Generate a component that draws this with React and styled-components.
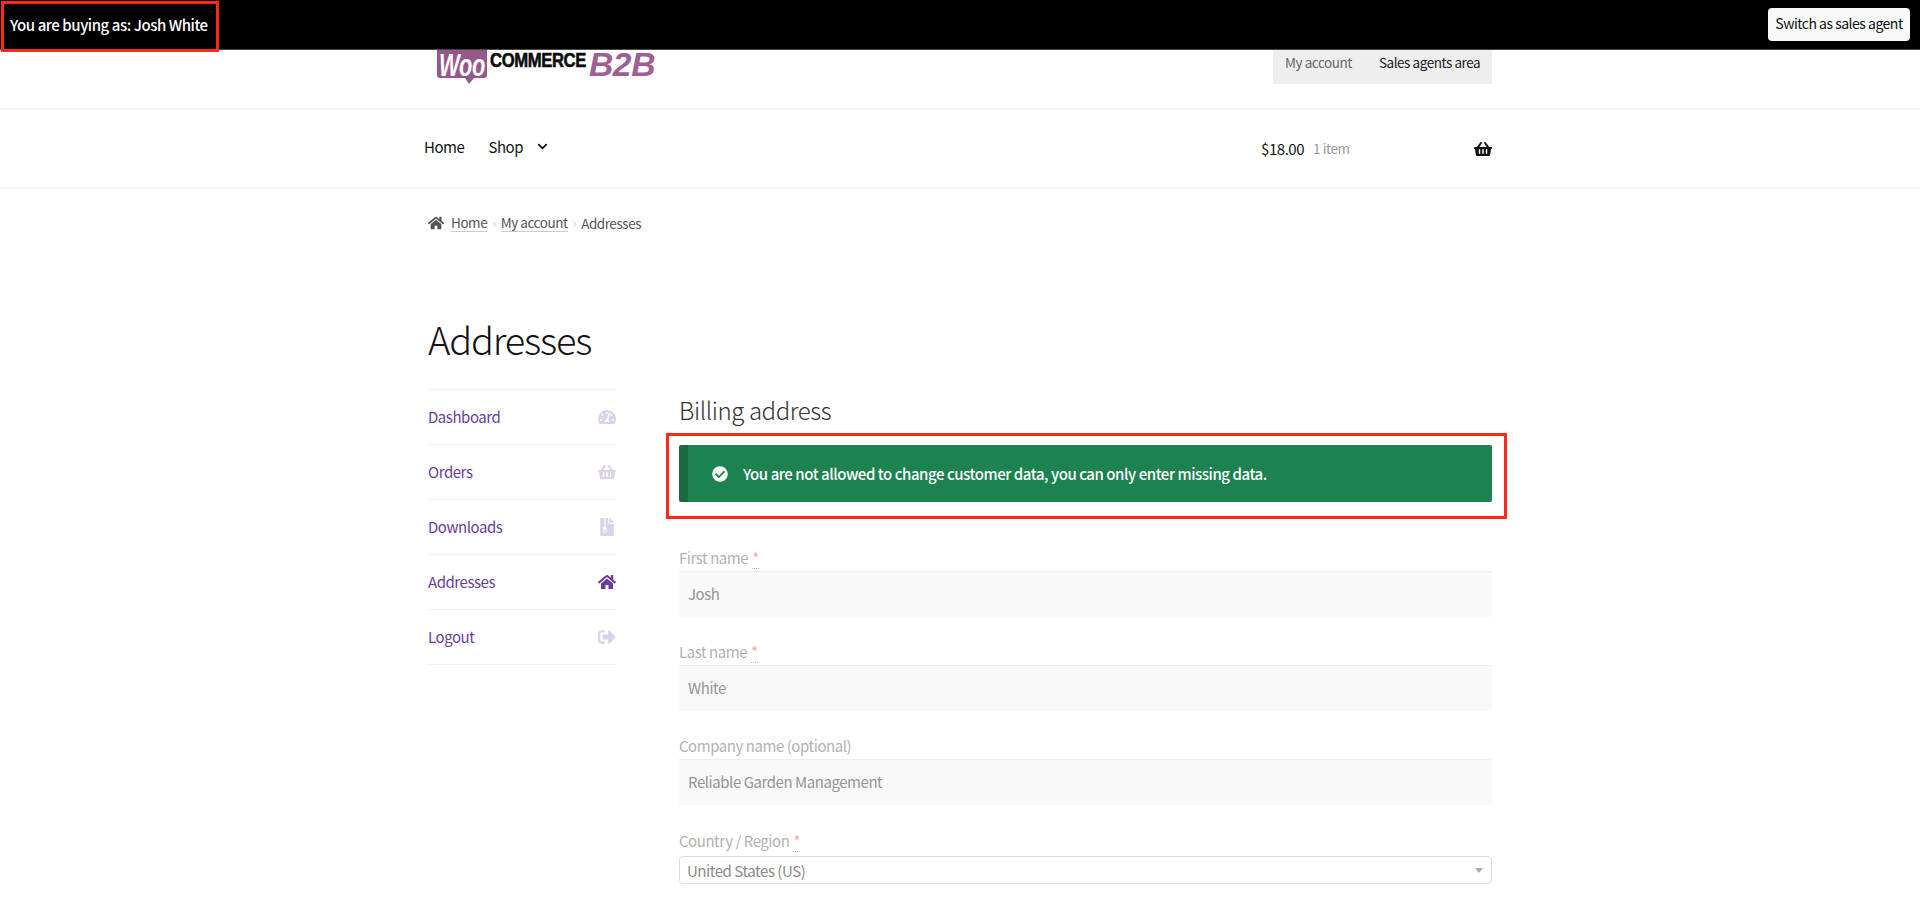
import React from 'react';
import styled, { createGlobalStyle } from 'styled-components';
import {
  FaCheckCircle,
  FaChevronDown,
  FaFileArchive,
  FaHome,
  FaShoppingBasket,
  FaSignOutAlt,
  FaTachometerAlt,
} from 'react-icons/fa';

const GlobalStyle = createGlobalStyle`
  html, body { margin: 0; padding: 0; background: #fff; }
  body {
    font-family: "Noto Sans CJK JP", "Open Sans", sans-serif;
    font-size: 15px;
    letter-spacing: -0.45px;
    line-height: 1.4;
    color: #43454b;
    overflow: hidden;
    height: 900px;
  }
  * { box-sizing: border-box; }
`;

const TopBar = styled.div`
  height: 50px;
  background: #000;
  border-bottom: 1px solid #444;
  display: flex;
  align-items: center;
  justify-content: space-between;
  padding: 0 10px 1px 10px;
  position: relative;
  z-index: 2;
`;

const Highlight = styled.div`
  position: absolute;
  border: 3px solid #fb2a1c;
  pointer-events: none;
  ${(p) => p.$css}
`;

const BuyingAs = styled.span`
  color: #fff;
  font-size: 15px;
  font-weight: 500;
`;

const SwitchButton = styled.button`
  width: 142px;
  height: 33px;
  padding: 0;
  border: 0;
  border-radius: 4px;
  background: #f8f9fb;
  color: #111;
  font: inherit;
  font-size: 14px;
  letter-spacing: -0.5px;
  white-space: nowrap;
`;

const Container = styled.div`
  width: 1064px;
  margin: 0 auto;
`;

const Masthead = styled.header`
  height: 60px;
  border-bottom: 2px solid #f1f1f1;
`;

const MastheadInner = styled(Container)`
  display: flex;
  justify-content: space-between;
  align-items: flex-start;
  height: 100%;
`;

const LogoMark = styled.svg`
  display: block;
  margin-left: 8px;
`;

const AccountTabs = styled.nav`
  width: 219px;
  height: 34px;
  background: #eeeeee;
  display: flex;
  align-items: center;
  gap: 27px;
  padding: 0 12px 9px;
  font-size: 13.5px;
  white-space: nowrap;
`;

const AccountTab = styled.span`
  color: ${(p) => (p.$strong ? '#1a1a1a' : '#666')};
`;

const NavBar = styled.div`
  height: 79px;
  border-bottom: 2px solid #f5f5f5;
`;

const NavInner = styled(Container)`
  display: flex;
  justify-content: space-between;
  align-items: center;
  height: 100%;
`;

const MainNav = styled.nav`
  display: flex;
  align-items: center;
  margin-left: -4px;
  margin-top: -4px;
  color: #111;
`;

const NavLink = styled.span`
  margin-right: ${(p) => p.$gap}px;
`;

const CartBox = styled.div`
  width: 231px;
  display: flex;
  align-items: center;
  color: #111;
`;

const CartCount = styled.span`
  margin-left: 9px;
  flex: 1;
  font-size: 13.5px;
  color: #999;
`;

const Breadcrumb = styled(Container)`
  display: flex;
  align-items: center;
  height: 20px;
  margin-top: 24px;
  font-size: 13.5px;
  color: #555;
  svg { color: #555; margin-right: 7px; }
`;

const CrumbLink = styled.span`
  border-bottom: 1px solid #ccc;
  line-height: 17px;
`;

const CrumbSep = styled.span`
  color: #ccc;
  margin: 0 5px;
  font-size: 13px;
`;

const PageTitle = styled.h1`
  margin: 78px 0 0;
  height: 82px;
  font-size: 38px;
  font-weight: 200;
  letter-spacing: -1.2px;
  line-height: 56px;
  color: #131315;
`;

const Columns = styled.div`
  display: flex;
  gap: 63px;
  margin-top: -4px;
`;

const SideMenu = styled.ul`
  list-style: none;
  width: 188px;
  margin: 0;
  padding: 0;
  border-top: 1px solid #f0f0f0;
  flex: none;
`;

const SideItem = styled.li`
  height: 55px;
  border-bottom: 1px solid #f0f0f0;
  display: flex;
  align-items: center;
  justify-content: space-between;
  color: #693d9b;
  padding-bottom: 1px;
  svg { color: ${(p) => (p.$active ? '#693d9b' : '#ddd2ec')}; }
`;

const Content = styled.section`
  flex: 1;
  min-width: 0;
  position: relative;
`;

const SectionTitle = styled.h3`
  margin: 0;
  height: 56px;
  font-size: 24px;
  font-weight: 300;
  letter-spacing: -0.4px;
  line-height: 42px;
  color: #333;
`;

const Notice = styled.div`
  height: 57px;
  background: #1c8250;
  border-left: 9px solid #1a6b41;
  border-radius: 2px;
  color: #fff;
  display: flex;
  align-items: center;
  gap: 15px;
  padding-left: 24px;
  font-weight: 500;
`;

const Field = styled.div`
  margin-top: ${(p) => p.$top}px;
`;

const FieldLabel = styled.label`
  display: block;
  height: ${(p) => p.$height || 24}px;
  line-height: 22px;
  color: #b2b2b2;
`;

const Required = styled.abbr`
  color: #f5a9a0;
  border-bottom: 1px dotted #f5a9a0;
  margin-left: 4px;
`;

const TextInput = styled.div`
  height: 46px;
  background: #f9f9f9;
  border-top: 1px solid #eeeeee;
  padding-left: 9px;
  display: flex;
  align-items: center;
  padding-bottom: 2px;
  color: #959595;
`;

const SelectBox = styled.div`
  height: 28px;
  border: 1px solid #dcdcdc;
  border-radius: 4px;
  padding: 0 8px 0 7px;
  display: flex;
  align-items: center;
  justify-content: space-between;
  color: #8b8b8b;
`;

const SelectArrow = styled.span`
  width: 0;
  height: 0;
  border-left: 4px solid transparent;
  border-right: 4px solid transparent;
  border-top: 5px solid #aaa;
`;

const menuItems = [
  { label: 'Dashboard', icon: FaTachometerAlt },
  { label: 'Orders', icon: FaShoppingBasket },
  { label: 'Downloads', icon: FaFileArchive },
  { label: 'Addresses', icon: FaHome, active: true },
  { label: 'Logout', icon: FaSignOutAlt },
];

const Logo = () => (
  <LogoMark width="222" height="40" viewBox="0 0 222 40">
    <path
      d="M3 -6 H48 Q51 -6 51 -3 V25 Q51 28 48 28 H38 L33 34 L29 28 H4 Q1 28 1 25 V-3 Q1 -6 3 -6 Z"
      fill="#96588a"
    />
    <text x="3" y="26" fontFamily="Liberation Sans" fontSize="32" fontWeight="700" fontStyle="italic" fill="#fff" textLength="46" lengthAdjust="spacingAndGlyphs">
      Woo
    </text>
    <text x="54" y="17" fontFamily="Liberation Sans" fontSize="20" fontWeight="700" fill="#0c0c0c" stroke="#0c0c0c" strokeWidth="0.6" textLength="96" lengthAdjust="spacingAndGlyphs">
      COMMERCE
    </text>
    <text x="153" y="26" fontFamily="Liberation Sans" fontSize="33" fontWeight="700" fontStyle="italic" fill="#9f5f95" textLength="66" lengthAdjust="spacingAndGlyphs">
      B2B
    </text>
  </LogoMark>
);

const App = () => (
  <>
    <GlobalStyle />
    <TopBar>
      <BuyingAs>You are buying as: Josh White</BuyingAs>
      <SwitchButton>Switch as sales agent</SwitchButton>
      <Highlight $css="left: 1px; top: 1px; width: 218px; height: 51px;" />
    </TopBar>

    <Masthead>
      <MastheadInner>
        <Logo />
        <AccountTabs>
          <AccountTab>My account</AccountTab>
          <AccountTab $strong>Sales agents area</AccountTab>
        </AccountTabs>
      </MastheadInner>
    </Masthead>

    <NavBar>
      <NavInner>
        <MainNav>
          <NavLink $gap={24}>Home</NavLink>
          <NavLink $gap={14}>Shop</NavLink>
          <FaChevronDown size={11} />
        </MainNav>
        <CartBox>
          <span>$18.00</span>
          <CartCount>1 item</CartCount>
          <FaShoppingBasket size={18} />
        </CartBox>
      </NavInner>
    </NavBar>

    <Breadcrumb>
      <FaHome size={16} />
      <CrumbLink>Home</CrumbLink>
      <CrumbSep>›</CrumbSep>
      <CrumbLink>My account</CrumbLink>
      <CrumbSep>›</CrumbSep>
      <span>Addresses</span>
    </Breadcrumb>

    <Container>
      <PageTitle>Addresses</PageTitle>
      <Columns>
        <SideMenu>
          {menuItems.map(({ label, icon: Icon, active }) => (
            <SideItem key={label} $active={active}>
              {label}
              <Icon size={18} />
            </SideItem>
          ))}
        </SideMenu>
        <Content>
          <SectionTitle>Billing address</SectionTitle>
          <Notice>
            <FaCheckCircle size={16} />
            You are not allowed to change customer data, you can only enter missing data.
          </Notice>
          <Highlight $css="left: -13px; right: -15px; top: 44px; height: 86px;" />
          <Field $top={45}>
            <FieldLabel>First name<Required>*</Required></FieldLabel>
            <TextInput>Josh</TextInput>
          </Field>
          <Field $top={24}>
            <FieldLabel>Last name<Required>*</Required></FieldLabel>
            <TextInput>White</TextInput>
          </Field>
          <Field $top={24}>
            <FieldLabel>Company name (optional)</FieldLabel>
            <TextInput>Reliable Garden Management</TextInput>
          </Field>
          <Field $top={25}>
            <FieldLabel $height={26}>Country / Region<Required>*</Required></FieldLabel>
            <SelectBox>
              United States (US)
              <SelectArrow />
            </SelectBox>
          </Field>
        </Content>
      </Columns>
    </Container>
  </>
);

export default App;
